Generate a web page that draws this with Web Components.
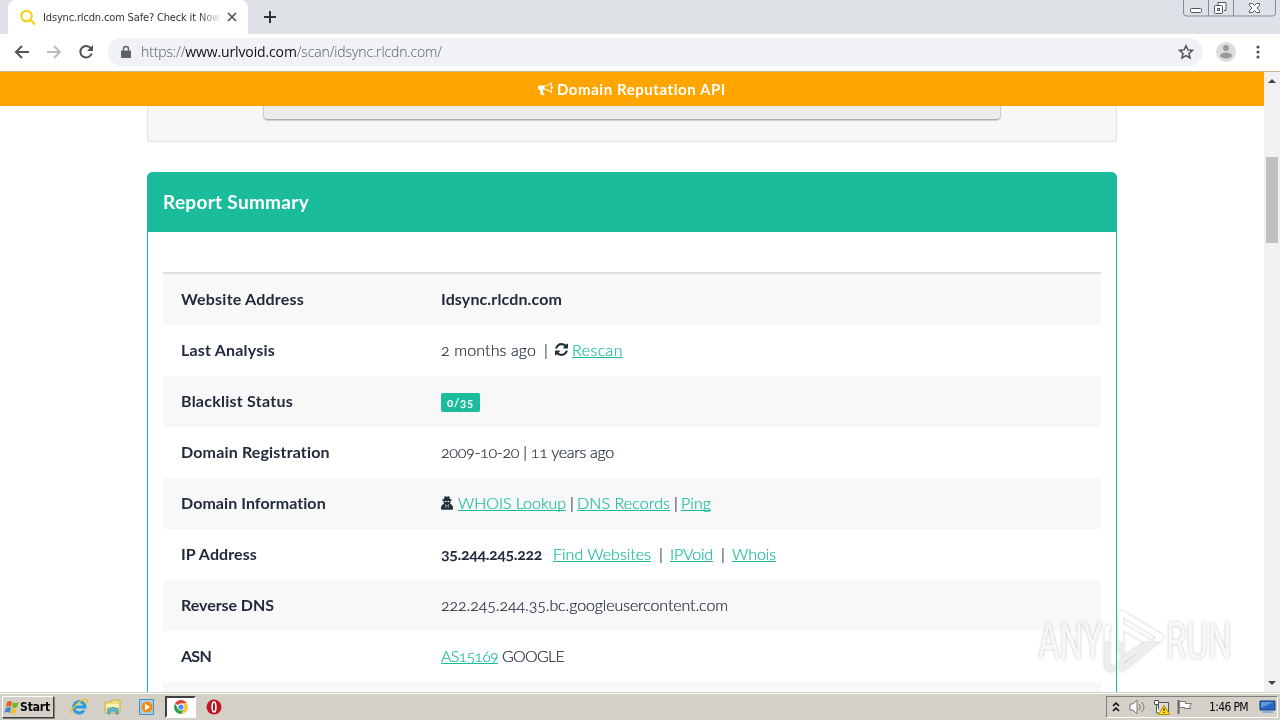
<!DOCTYPE html>
<html lang="en">
<head>
<meta charset="utf-8">
<title>Idsync.rlcdn.com Safe? Check it Now</title>
<style>
  html, body { margin: 0; height: 100%; overflow: hidden; }
  body { font-family: Lato, "Open Sans", sans-serif; }
</style>
</head>
<body>
<desktop-screen>
  <browser-bar></browser-bar>
  <site-page>
    <report-panel heading="Report Summary">
      <report-row label="Website Address" w="123"><fit-text w="121" style="font-weight:700">Idsync.rlcdn.com</fit-text></report-row>
      <report-row label="Last Analysis" w="94">
        <fit-text w="95">2 months ago</fit-text><fit-text w="3" style="margin-left:8px">|</fit-text>
        <refresh-icon style="margin-left:8px"></refresh-icon>
        <fit-text w="51" link style="margin-left:4px">Rescan</fit-text>
      </report-row>
      <report-row label="Blacklist Status" w="112"><status-badge>0/35</status-badge></report-row>
      <report-row label="Domain Registration" w="149"><fit-text w="173">2009-10-20 | 11 years ago</fit-text></report-row>
      <report-row label="Domain Information" w="145">
        <secret-icon></secret-icon>
        <fit-text w="108" link style="margin-left:4px">WHOIS Lookup</fit-text><fit-text w="3" style="margin-left:4px">|</fit-text>
        <fit-text w="93" link style="margin-left:4px">DNS Records</fit-text><fit-text w="3" style="margin-left:4px">|</fit-text>
        <fit-text w="30" link style="margin-left:4px">Ping</fit-text>
      </report-row>
      <report-row label="IP Address" w="76">
        <fit-text w="101" style="font-weight:700">35.244.245.222</fit-text>
        <fit-text w="98" link style="margin-left:11px">Find Websites</fit-text><fit-text w="3" style="margin-left:8px">|</fit-text>
        <fit-text w="43" link style="margin-left:8px">IPVoid</fit-text><fit-text w="3" style="margin-left:8px">|</fit-text>
        <fit-text w="44" link style="margin-left:8px">Whois</fit-text>
      </report-row>
      <report-row label="Reverse DNS" w="93"><fit-text w="287">222.245.244.35.bc.googleusercontent.com</fit-text></report-row>
      <report-row label="ASN" w="30">
        <fit-text w="57" link>AS15169</fit-text><fit-text w="62" style="margin-left:4px">GOOGLE</fit-text>
      </report-row>
      <report-row></report-row>
    </report-panel>
  </site-page>
  <task-bar></task-bar>
  <run-watermark></run-watermark>
</desktop-screen>

<script>
  function define(name, html, setup) {
    customElements.define(name, class extends HTMLElement {
      constructor() {
        super();
        this.attachShadow({ mode: 'open' }).innerHTML = html;
      }
      connectedCallback() {
        if (setup) setup(this, this.shadowRoot);
      }
    });
  }

  // one line of text, letter-spaced to fill the width given in "w"
  define('fit-text', `
    <style>
      :host { display: block; flex: none; white-space: nowrap; }
      :host([link]) span { color: #1abc9c; text-decoration: underline; text-decoration-thickness: 1px; text-underline-offset: 1px; text-decoration-skip-ink: none; }
    </style>
    <span><slot></slot></span>
  `, (el, root) => {
    const span = root.querySelector('span');
    const want = Number(el.getAttribute('w'));
    el.style.width = want + 'px';
    requestAnimationFrame(() => {
      const count = el.textContent.length;
      if (count > 1) {
        span.style.letterSpacing = (want - span.getBoundingClientRect().width) / count + 'px';
      }
    });
  });

  define('refresh-icon', `
    <style>:host { display: block; width: 13px; height: 13px; } svg { display: block; }</style>
    <svg width="13" height="13" viewBox="0 0 1536 1536"><path fill="#222f3d" d="M1511 928q0 5-1 7-64 268-268 434.500T764 1536q-146 0-282.500-55T238 1324l-129 129q-19 19-45 19t-45-19-19-45V960q0-26 19-45t45-19h448q26 0 45 19t19 45-19 45l-137 137q71 66 161 102t187 36q134 0 250-65t186-179q11-17 53-117 8-23 30-23h192q13 0 22.500 9.500t9.500 22.500zM1536 128v448q0 26-19 45t-45 19h-448q-26 0-45-19t-19-45 19-45l138-138Q969 256 768 256q-134 0-250 65T332 500q-11 17-53 117-8 23-30 23H50q-13 0-22.500-9.500T18 608v-7q65-268 270-434.500T768 0q146 0 284 55.500T1297 212l130-129q19-19 45-19t45 19 19 45z"/></svg>
  `);

  define('secret-icon', `
    <style>:host { display: block; width: 13px; height: 14px; } svg { display: block; }</style>
    <svg width="12" height="14" viewBox="0 0 12 14"><path fill="#222f3d" d="M3.600.500Q4.500-.200 6 .700 7.500-.200 8.400.500L9 3l1.800.600v.800L9.500 4.800v1.800L9 7.800 11 9l1 2v2q0 .800-1 .800H1Q0 13.800 0 13v-2l1-2 2-1.200-.500-1.200V4.800L1.200 4.400v-.800L3 3z"/><path fill="#f7f7f7" d="M3.600 5h1.900v1.100H3.800zM6.500 5h1.900l-.200 1.100H6.500zM4.200 8l1.200 1.200-.5 3.300zM7.800 8 6.600 9.200l.5 3.300z"/></svg>
  `);

  define('status-badge', `
    <style>
      :host { display: flex; align-items: center; justify-content: center; width: 39px; height: 19px; margin-top: 4px; border-radius: 2px;
        background: #1abc9c; color: #fff; font: 700 11.500px Lato, sans-serif; letter-spacing: .7px; font-variant-numeric: oldstyle-nums; -webkit-text-stroke: 0; }
    </style>
    <slot></slot>
  `);

  define('report-row', `
    <style>
      :host { display: flex; align-items: center; height: 51px; padding-bottom: 2px; box-sizing: border-box; color: #222b3c; font-size: 16px; font-weight: 300; line-height: 22px; font-variant-numeric: oldstyle-nums; }
      :host(:nth-child(odd)) { background: #f8f8f8; }
      .label { width: 260px; padding-left: 18px; flex: none; font-weight: 700; }
      .value { display: flex; align-items: center; }
      ::slotted(fit-text:not([style*="700"])) { -webkit-text-stroke: .2px; }
    </style>
    <div class="label"></div>
    <div class="value"><slot></slot></div>
  `, (el, root) => {
    if (!el.getAttribute('label')) return;
    root.querySelector('.label').innerHTML = `<fit-text w="${el.getAttribute('w')}">${el.getAttribute('label')}</fit-text>`;
  });

  define('report-panel', `
    <style>
      :host { display: block; width: 970px; margin: 30px auto 0; box-sizing: border-box; border: 1px solid #1abc9c; border-radius: 5px 5px 0 0; height: 600px; }
      header { display: flex; align-items: center; height: 59px; padding: 0 0 2px 15px; box-sizing: border-box; background: #1abc9c; color: #fff; font-size: 19px; font-weight: 700; border-radius: 3px 3px 0 0; }
      .rows { margin: 40px 15px 0; border-top: 2px solid #ddd; }
    </style>
    <header></header>
    <div class="rows"><slot></slot></div>
  `, (el, root) => {
    root.querySelector('header').innerHTML = `<fit-text w="146">${el.getAttribute('heading')}</fit-text>`;
  });

  define('scroll-bar', `
    <style>
      :host { display: flex; flex-direction: column; align-items: center; width: 16px; height: 620px; background: #f1f1f1; }
      svg { display: block; flex: none; }
      .thumb { width: 12px; height: 86px; margin-top: 68px; margin-bottom: auto; background: #c1c1c1; }
    </style>
    <svg width="16" height="17"><path d="M4 11 8 7l4 4z" fill="#444"/></svg>
    <div class="thumb"></div>
    <svg width="16" height="17"><path d="M4 6h8l-4 4z" fill="#444"/></svg>
  `);

  define('site-page', `
    <style>
      :host { display: flex; height: 620px; background: #fff; overflow: hidden; }
      main { width: 1264px; overflow: hidden; }
      .banner { display: flex; align-items: center; justify-content: center; gap: 4px; height: 34px; padding-bottom: 1px; box-sizing: border-box; background: #ffa500; color: #fff; font-weight: 700; font-size: 15px; }
      .box { width: 970px; height: 36px; margin: 0 auto; box-sizing: border-box; border: 1px solid #e3e3e3; border-top: 0; background: #f7f7f7; }
      .button { width: 736px; height: 13px; margin: 0 auto; background: #ebebeb; border: 1px solid #ccc; border-top: 0; border-bottom-color: #aaa; border-radius: 0 0 5px 5px; box-shadow: 0 1px 1px #ccc; }
    </style>
    <main>
      <div class="banner">
        <svg width="15" height="15" viewBox="0 0 1792 1792"><path fill="#fff" d="M1664 640q53 0 90.500 37.500T1792 768t-37.500 90.500T1664 896v384q0 52-38 90t-90 38q-417-347-812-380-58 19-91 66t-31 100.500 40 92.500q-20 33-23 65.500t6 58 33.500 55 48 50T768 1617q-29 58-111.500 83t-168.500 11.500T356 1656q-7-23-29.500-87.500t-32-94.500-23-89-15-101 3.500-98.500T282 1064H160q-66 0-113-47T0 904V712q0-66 47-113t113-47h480q435 0 896-384 52 0 90 38t38 90zM1536 1244V292q-394 302-768 343v270q377 42 768 339z"/></svg>
        <fit-text w="169">Domain Reputation API</fit-text>
      </div>
      <div class="box"><div class="button"></div></div>
      <slot></slot>
    </main>
    <scroll-bar></scroll-bar>
  `);

  define('window-buttons', `
    <style>:host { display: block; height: 34px; margin-right: 3px; } svg { display: block; }</style>
    <svg width="94" height="18" fill="none" stroke="#858a96">
      <path d="M.5 0v13q0 3 3 3h86q3 0 3-3V0M25.500 0v16M50.500 0v16"/>
      <g stroke="#525866"><rect x="7.500" y="8.500" width="11" height="4" rx="1" fill="#fff"/>
      <path d="M35 5V2.500h8v8h-2" fill="#fff"/><rect x="31.500" y="5.500" width="8" height="8" rx="1" fill="#fff"/><rect x="34.500" y="8.500" width="2" height="2"/>
      <path fill="#fff" d="M66.500 3.500h3l2 2 2-2h3v2L74 8l2.500 2.500v2h-3l-2-2-2 2h-3v-2L69 8l-2.500-2.500z"/></g>
    </svg>
  `);

  define('browser-bar', `
    <style>
      :host { display: block; height: 72px; box-sizing: border-box; border-bottom: 1px solid #c9b98f; background: #fff; }
      .strip { display: flex; height: 34px; background: #dee1e6; }
      .tab { display: flex; align-items: center; width: 240px; box-sizing: border-box; margin-left: 8px; padding-left: 12px; background: #fff; border-radius: 8px 8px 0 0; font: 11px "DejaVu Sans Condensed", "DejaVu Sans", sans-serif; color: #333; }
      .title { width: 177px; margin-left: 7px; -webkit-mask: linear-gradient(90deg, #000 155px, transparent 180px); }
      .tab svg:last-child { margin-left: 6px; }
      .plus { margin: 10px auto 0 15px; }
      .tools { display: flex; align-items: center; height: 36px; padding-left: 14px; }
      .omni { display: flex; align-items: center; width: 1095px; height: 28px; box-sizing: border-box; padding: 0 9px 0 12px; margin-left: 14px; border-radius: 14px; background: #f0f2f5; font: 300 14px "Open Sans", sans-serif; color: #555b62; }
      .omni fit-text { margin: -2px 0 0 9px; }
      .omni svg:last-child { margin-left: auto; }
      b { font-weight: 400; color: #111; }
      svg { display: block; flex: none; }
    </style>
    <div class="strip">
      <div class="tab">
        <svg width="16" height="17" fill="none" stroke="#f7cf18" stroke-width="2.200"><circle cx="6.500" cy="7" r="5.200"/><path d="m10.500 11 4.500 4.500"/></svg>
        <div class="title"><fit-text w="177">Idsync.rlcdn.com Safe? Check it Now</fit-text></div>
        <svg width="16" height="12" fill="none" stroke="#555" stroke-width="1.700"><path d="m2 2 8 8M10 2l-8 8"/></svg>
      </div>
      <svg class="plus" width="14" height="14" stroke="#333" stroke-width="2"><path d="M7 1v12M1 7h12"/></svg>
      <window-buttons></window-buttons>
    </div>
    <div class="tools">
      <svg width="80" height="16" fill="none" stroke-width="2">
        <path stroke="#505357" d="M15 8H2m6-6L2 8l6 6"/>
        <path stroke="#b8babd" d="M33 8h13m-6-6 6 6-6 6"/>
        <path stroke="#505357" d="M77 4.500A5.800 5.800 0 1 0 77.700 9.500"/><path fill="#505357" d="M79 1v6h-6z"/>
      </svg>
      <div class="omni">
        <svg width="12" height="14"><path d="M3.500 6V4a2.500 2.500 0 0 1 5 0v2" fill="none" stroke="#5f6368" stroke-width="1.500"/><rect x="1" y="5.500" width="10" height="7.500" rx="1" fill="#5f6368"/></svg>
        <fit-text w="301">https://<b>www.urlvoid.com</b>/scan/idsync.rlcdn.com/</fit-text>
        <svg width="16" height="16"><path d="m8 1.700 1.900 4.200 4.500.500-3.400 3 1 4.500-4-2.400-4 2.400 1-4.500-3.400-3 4.500-.5z" fill="none" stroke="#505357" stroke-width="1.500"/></svg>
      </div>
      <svg width="20" height="20" style="margin-left:13px"><circle cx="10" cy="10" r="10" fill="#dcdcde"/><circle cx="10" cy="6" r="3" fill="#9a9a9c"/><ellipse cx="10" cy="13.500" rx="6" ry="3" fill="#9a9a9c"/></svg>
      <svg width="4" height="16" style="margin-left:20px" fill="#505357"><circle cx="2" cy="3" r="1.600"/><circle cx="2" cy="8" r="1.600"/><circle cx="2" cy="13" r="1.600"/></svg>
    </div>
  `);

  define('task-bar', `
    <style>
      :host { display: flex; align-items: center; height: 28px; box-sizing: border-box; border-top: 1px solid #d4d0c8; box-shadow: inset 0 1px #fff; background: #d4d0c8; font: 12px "DejaVu Sans Condensed", "DejaVu Sans", sans-serif; color: #000; }
      svg { display: block; flex: none; }
      .start { display: flex; align-items: center; width: 52px; height: 22px; box-sizing: border-box; margin-left: 2px; padding-left: 1px; border: 1px solid; border-color: #fff #404040 #404040 #fff; box-shadow: 1px 1px #808080; font-weight: 700; }
      .active { display: flex; align-items: center; justify-content: center; width: 31px; height: 22px; box-sizing: border-box; margin: 0 10px 0 9px; border: 2px solid; border-color: #404040 #fff #fff #404040; background: #fff; }
      .tray { display: flex; align-items: center; width: 172px; height: 22px; box-sizing: border-box; margin-left: auto; margin-right: 2px; border: 1px solid; border-color: #808080 #fff #fff #808080; }
    </style>
    <div class="start">
      <svg width="15" height="16"><path fill="#e85b22" d="M3 3q3-2 5 0L7 8q-3-2-5 0z"/><path fill="#73b52e" d="M9 3q3 2 6 0l-2 5q-3 2-5 0z"/><path fill="#3d89d6" d="M2 9q3-2 5 0l-1 5q-3-2-6 0z"/><path fill="#f3bd23" d="M8 9q2 2 5 0l-2 5q-3 2-4 0z"/></svg>
      <fit-text w="30" style="margin-left:1px">Start</fit-text>
    </div>
    <svg width="18" height="18" style="margin-left:16px"><path d="M14 12.500A5.700 5.700 0 1 1 15 9H5" fill="none" stroke="#299ddb" stroke-width="3"/><path d="M2 15Q-1 14 6 7T17 2q1 1-1 4" fill="none" stroke="#edbd36" stroke-width="1.500"/></svg>
    <svg width="18" height="18" style="margin-left:16px"><path d="M1 4h6l1-2h8v13H1z" fill="#eedb82" stroke="#cdb050"/><path d="M2 6h13v3H2z" fill="#fff3b2"/><path d="M4 16v-5q5-3 10 0v5h-2v-3H6v3z" fill="#64b8d8" stroke="#3d97bf"/></svg>
    <svg width="18" height="18" style="margin-left:16px"><path d="M1.500 1.500h14v15h-14z" fill="#a7cfea" stroke="#498cbd"/><circle cx="9" cy="9" r="5.500" fill="#f58b16"/><path d="m7 5.500 5 3.500-5 3.500z" fill="#fff"/></svg>
    <div class="active">
      <svg width="14" height="14" viewBox="-7 -7 14 14"><path fill="#e34234" d="M0 0-6-3.500A7 7 0 0 1 6-3.500H0z"/><path fill="#fbc52d" d="M0-3.500h6A7 7 0 0 1 0 7l3-5.200z"/><path fill="#2d9e4b" d="M-6-3.500A7 7 0 0 0 0 7l3-5.200-6 0z"/><circle r="3.400" fill="#fff"/><circle r="2.600" fill="#438af4"/></svg>
    </div>
    <svg width="16" height="16"><circle cx="8" cy="8" r="7.500" fill="#bd1722"/><ellipse cx="8" cy="8" rx="1.800" ry="5" fill="#8b0710" stroke="#fff" stroke-width="1.700"/></svg>
    <div class="tray">
      <svg width="10" height="12" style="margin-left:4px" fill="none" stroke="#000" stroke-width="1.500"><path d="m2 5 3-3 3 3M2 10l3-3 3 3"/></svg>
      <svg width="18" height="16" style="margin-left:8px" fill="none" stroke="#777"><path d="M1 5h3l4-4v14l-4-4H1z" fill="#fff"/><path d="M10 5q3 3 0 6M12.500 3q5 5 0 10"/></svg>
      <svg width="18" height="16" style="margin-left:6px"><path d="M5.500 3.500h10v10h-10z" fill="#ddd" stroke="#555"/><path d="M1.500 1.500h4v4h-4zM3.500 6v8H7" fill="#fff" stroke="#555"/><path d="m11 6 5.500 9.500h-11z" fill="#ffd91a" stroke="#b79400"/><path d="M11 9v3m0 1v1" stroke="#000"/></svg>
      <svg width="18" height="16" style="margin-left:5px"><path d="M2.500 1v14" stroke="#666" stroke-width="2"/><path d="M3.500 2.500h6v2h6l-2 3 1 2h-6v-1h-5z" fill="#fff" stroke="#777"/></svg>
      <fit-text w="39" style="margin-left:15px">1:46 PM</fit-text>
      <svg width="17" height="14" style="margin-left:11px"><path d="M1 1h15v9H1z" fill="#2867be" stroke="#173f7e"/><path d="M2 2h13L2 8z" fill="#5b9ae2"/><path d="M3 11h11v2H3z" fill="#8db3df"/></svg>
    </div>
  `);

  // translucent mark that floats over the page
  define('run-watermark', `
    <style>
      :host { position: absolute; left: 1030px; top: 601px; pointer-events: none; }
      svg { display: block; filter: drop-shadow(0 0 1.500px rgba(0, 0, 0, .32)); opacity: .7; }
      text { font: 400 51px Roboto, sans-serif; fill: url(#fade); }
    </style>
    <svg width="248" height="76">
      <defs><linearGradient id="fade" gradientUnits="userSpaceOnUse" x1="0" y1="0" x2="0" y2="76"><stop offset=".52" stop-color="#fff"/><stop offset=".52" stop-color="#e8e8e8"/></linearGradient></defs>
      <text transform="translate(8 58) scale(.65 1)" y="0" style="fill:#f6f6f6">ANY</text>
      <g fill="none" stroke="url(#fade)" stroke-width="5" stroke-linejoin="round">
        <path d="M81 26q-4 0-4 5v31q0 6 4 6l5-1"/>
        <path d="M91 53V12l40 24-39 32v-9l27-18-28-16"/>
      </g>
      <text transform="translate(136 58) scale(.65 1)" y="0" style="fill:#f6f6f6">RUN</text>
    </svg>
  `);

  define('desktop-screen', `
    <style>:host { display: block; position: relative; width: 1280px; height: 720px; overflow: hidden; will-change: transform; }</style>
    <slot></slot>
  `);
</script>
</body>
</html>
